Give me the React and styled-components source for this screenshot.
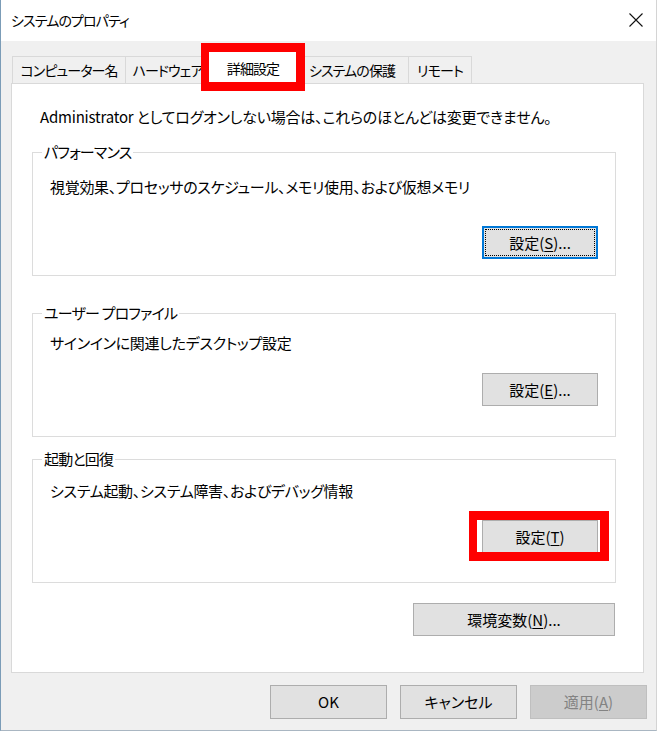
import React from "react";
import styled, { createGlobalStyle, css } from "styled-components";

const GlobalStyle = createGlobalStyle`
  html, body {
    margin: 0;
    padding: 0;
    background: #ffffff;
  }
  body {
    font-family: "Noto Sans CJK JP", "Noto Sans", sans-serif;
    font-size: 15px;
    color: #000000;
    font-feature-settings: "palt";
  }
  * {
    box-sizing: border-box;
  }
`;

// red annotation frame drawn over a control
const redMark = css`
  &::before {
    content: "";
    position: absolute;
    top: ${(p) => p.$mark.top}px;
    right: ${(p) => p.$mark.right}px;
    bottom: ${(p) => p.$mark.bottom}px;
    left: ${(p) => p.$mark.left}px;
    border: 8px solid #ff0000;
    border-width: 9px 9px 9px 8px;
    pointer-events: none;
    z-index: 3;
  }
`;

const Window = styled.div`
  width: 657px;
  height: 731px;
  display: flex;
  flex-direction: column;
  background: #f0f0f0;
  border-left: 1px solid #7b9cb7;
  border-right: 1px solid #d4d4d4;
  border-bottom: 1px solid #a9b6c2;
`;

const TitleBar = styled.div`
  height: 41px;
  flex: none;
  display: flex;
  align-items: center;
  justify-content: space-between;
  padding: 0 13px 2px 10px;
  background: #ffffff;
`;

const Title = styled.div`
  font-size: 14px;
  letter-spacing: -0.9px;
  line-height: 20px;
`;

const CloseIcon = () => (
  <svg width="14" height="14" viewBox="0 0 14 14">
    <path d="M0.5 0.5 L13.5 13.5 M13.5 0.5 L0.5 13.5" stroke="#111" strokeWidth="1.1" fill="none" />
  </svg>
);

const Body = styled.div`
  flex: 1;
  display: flex;
  flex-direction: column;
  padding-top: 9px;
`;

const TabRow = styled.div`
  display: flex;
  align-items: flex-end;
  height: 33px;
  margin-left: 10px;
  padding-left: 2px;
`;

const Tab = styled.div`
  position: relative;
  flex: none;
  width: ${(p) => p.$w}px;
  height: 27px;
  display: flex;
  align-items: center;
  justify-content: center;
  white-space: nowrap;
  font-size: 14px;
  letter-spacing: -0.9px;
  line-height: 20px;
  padding-bottom: 1px;
  background: #f0f0f0;
  border: 1px solid #d9d9d9;
  border-bottom: none;
  margin-left: -1px;

  ${(p) =>
    p.$active &&
    css`
      width: ${p.$w + 4}px;
      height: 34px;
      margin: 0 -2px -1px -2px;
      background: #ffffff;
      z-index: 2;
      padding-bottom: 0;
    `}

  ${(p) => p.$mark && redMark}
`;

const Panel = styled.div`
  position: relative;
  z-index: 1;
  margin-left: 10px;
  width: 633px;
  height: 590px;
  display: flex;
  flex-direction: column;
  padding: 23px 27px 0 20px;
  background: #ffffff;
  border: 1px solid #d9d9d9;
`;

const InfoText = styled.div`
  margin-left: 8px;
  line-height: 20px;
  white-space: nowrap;
  letter-spacing: -0.2px;
`;

const Group = styled.div`
  position: relative;
  height: 124px;
  margin-top: ${(p) => p.$mt}px;
  padding: ${(p) => p.$pt}px 17px 0 17px;
  border: 1px solid #dcdcdc;
  display: flex;
  flex-direction: column;
`;

const Legend = styled.span`
  position: absolute;
  top: -11px;
  left: 9px;
  padding: 0 2px;
  line-height: 20px;
  letter-spacing: -0.8px;
  background: #ffffff;
  white-space: nowrap;
`;

const Desc = styled.div`
  line-height: 20px;
  letter-spacing: -0.3px;
  white-space: nowrap;
`;

const ButtonRow = styled.div`
  display: flex;
  justify-content: flex-end;
  margin-top: ${(p) => p.$mt}px;
  margin-right: ${(p) => p.$mr || 0}px;
`;

const Button = styled.button`
  position: relative;
  width: ${(p) => p.$w || 116}px;
  height: ${(p) => p.$h || 33}px;
  padding: 0;
  font-family: inherit;
  font-size: 15px;
  font-feature-settings: "palt";
  line-height: 20px;
  color: #000000;
  background: #e1e1e1;
  border: 1px solid #adadad;
  border-radius: 0;

  u {
    text-underline-offset: 2px;
  }

  ${(p) =>
    p.$focused &&
    css`
      border-color: #0078d7;
      box-shadow: inset 0 0 0 1px #0078d7;
      &::after {
        content: "";
        position: absolute;
        inset: 2px;
        border: 1px dotted #000000;
      }
    `}

  &:disabled {
    color: #838383;
    background: #cccccc;
    border-color: #bfbfbf;
  }

  ${(p) => p.$mark && redMark}
`;

const ButtonBar = styled.div`
  display: flex;
  justify-content: flex-end;
  gap: 13px;
  margin-top: 12px;
  padding-right: 9px;
`;

const tabs = [
  { label: "コンピューター名", w: 114 },
  { label: "ハードウェア", w: 85 },
  { label: "詳細設定", w: 86, active: true },
  { label: "システムの保護", w: 114 },
  { label: "リモート", w: 64 },
];

const App = () => {
  return (
    <>
      <GlobalStyle />
      <Window>
        <TitleBar>
          <Title>システムのプロパティ</Title>
          <CloseIcon />
        </TitleBar>

        <Body>
          <TabRow>
            {tabs.map((t) => (
              <Tab
                key={t.label}
                $w={t.w}
                $active={t.active}
                $mark={t.active ? { top: -8, right: -8, bottom: -7, left: -8 } : null}
              >
                {t.label}
              </Tab>
            ))}
          </TabRow>

          <Panel>
            <InfoText>Administrator としてログオンしない場合は、これらのほとんどは変更できません。</InfoText>

            <Group $mt={25} $pt={24}>
              <Legend>パフォーマンス</Legend>
              <Desc>視覚効果、プロセッサのスケジュール、メモリ使用、および仮想メモリ</Desc>
              <ButtonRow $mt={29}>
                <Button $focused>
                  設定(<u>S</u>)...
                </Button>
              </ButtonRow>
            </Group>

            <Group $mt={37} $pt={19}>
              <Legend>ユーザー プロファイル</Legend>
              <Desc>サインインに関連したデスクトップ設定</Desc>
              <ButtonRow $mt={20}>
                <Button>
                  設定(<u>E</u>)...
                </Button>
              </ButtonRow>
            </Group>

            <Group $mt={22} $pt={21}>
              <Legend>起動と回復</Legend>
              <Desc>システム起動、システム障害、およびデバッグ情報</Desc>
              <ButtonRow $mt={19}>
                <Button $mark={{ top: -10, right: -12, bottom: -9, left: -14 }}>
                  設定(<u>T</u>)
                </Button>
              </ButtonRow>
            </Group>

            <ButtonRow $mt={20} $mr={1}>
              <Button $w={202}>
                環境変数(<u>N</u>)...
              </Button>
            </ButtonRow>
          </Panel>

          <ButtonBar>
            <Button $w={117} $h={34}>OK</Button>
            <Button $w={117} $h={34}>キャンセル</Button>
            <Button $w={117} $h={34} disabled>
              適用(<u>A</u>)
            </Button>
          </ButtonBar>
        </Body>
      </Window>
    </>
  );
};

export default App;
